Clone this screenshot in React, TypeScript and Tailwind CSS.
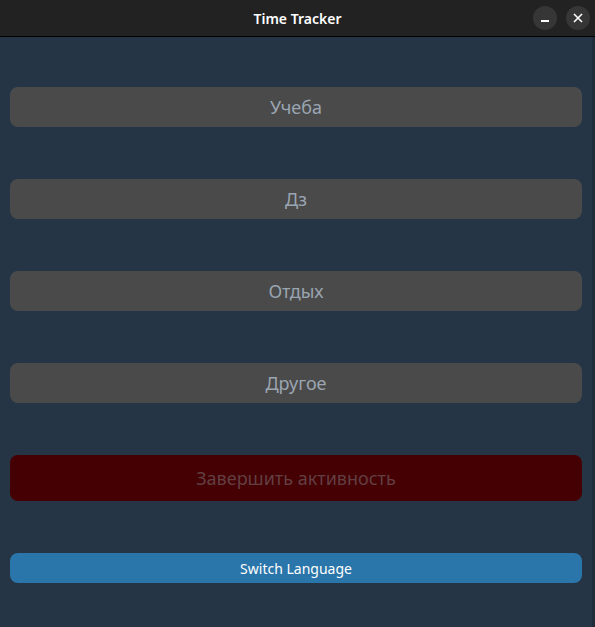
import React from "react";

const items = ["Учеба", "Дз", "Отдых", "Другое"];

export default function App() {
  return (
    <div className="flex h-[627px] w-[595px] flex-col bg-[#263545] font-['Noto_Sans',sans-serif]">
      <div className="relative flex h-[37px] shrink-0 items-center justify-center border-b border-black bg-[#222222]">
        <span className="text-[14px] font-semibold text-white">Time Tracker</span>
        <div className="absolute right-[5px] top-[6px] flex gap-[9px]">
          <button className="flex h-[24px] w-[24px] items-center justify-center rounded-full bg-[#363636]">
            <span className="mt-[6px] block h-[2px] w-[8px] bg-white" />
          </button>
          <button className="flex h-[24px] w-[24px] items-center justify-center rounded-full bg-[#363636]">
            <svg width="10" height="10" viewBox="0 0 10 10">
              <path d="M1 1 L9 9 M9 1 L1 9" stroke="white" strokeWidth="1.6" />
            </svg>
          </button>
        </div>
      </div>
      <div className="flex flex-1 border-r-[3px] border-[#1f2c39]">
        <div className="flex flex-1 flex-col gap-[52px] px-[10px] pt-[50px]">
          {items.map((item) => (
            <button
              key={item}
              className="h-[40px] rounded-[8px] bg-[#4a4a4a] text-[18px] text-[#9aa5b1]"
            >
              {item}
            </button>
          ))}
          <button className="h-[46px] rounded-[8px] bg-[#450004] text-[18px] text-[#623f41]">
            Завершить активность
          </button>
          <button className="h-[30px] rounded-[8px] bg-[#2a75a9] text-[14px] text-white">
            Switch Language
          </button>
        </div>
      </div>
    </div>
  );
}
